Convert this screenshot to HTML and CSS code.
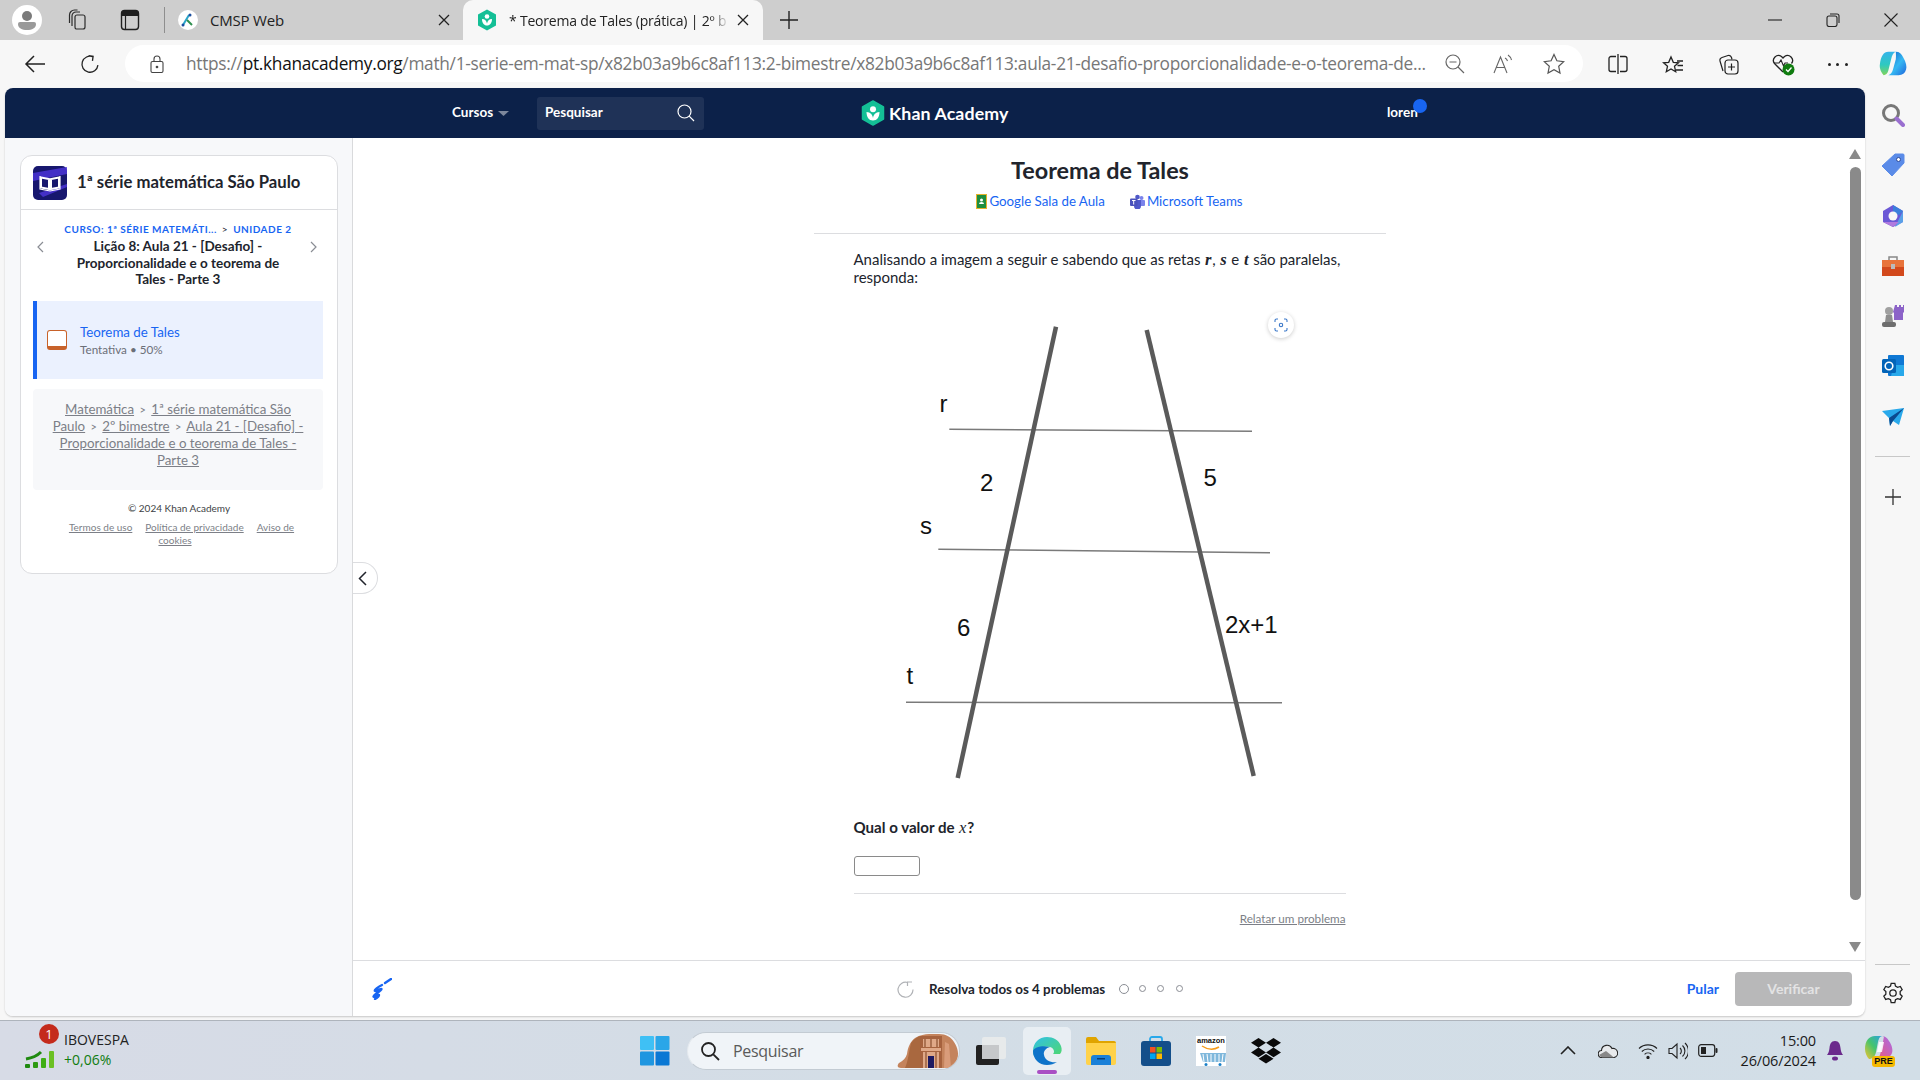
FILE: index.html
```html
<!DOCTYPE html>
<html lang="pt-BR">
<head>
<meta charset="utf-8">
<title>Teorema de Tales</title>
<link rel="stylesheet" href="styles.css">
</head>
<body>
<div class="screen">
  <header class="tabstrip">
    <div class="profile"><svg width="30" height="30" viewBox="0 0 30 30"><circle cx="15" cy="15" r="15" fill="#fff"/><circle cx="15" cy="11" r="5" fill="#7a7a7a"/><path d="M6 19a2 2 0 0 1 2-2h14a2 2 0 0 1 2 2c0 4-4 6-9 6s-9-2-9-6z" fill="#9a9a9a"/></svg></div>
    <div class="strip-ic ic-coll"><svg width="22" height="22" viewBox="0 0 22 22" fill="none" stroke="#2b2b2b" stroke-width="1.2"><path d="M9 20h7a2 2 0 0 0 2-2V8a2 2 0 0 0-2-2H10a2 2 0 0 0-2 2v10a2 2 0 0 0 1 2z"/><path d="M5 17V7a4 4 0 0 1 4-4h4M2.500 14V6a5 5 0 0 1 5-5h3"/></svg></div>
    <div class="strip-ic ic-vert"><svg width="20" height="22" viewBox="0 0 20 22"><rect x="1.500" y="1.500" width="17" height="19" rx="3" fill="none" stroke="#1f1f1f" stroke-width="1.400"/><path d="M1.500 4.500a3 3 0 0 1 3-3h11a3 3 0 0 1 3 3V7h-17z" fill="#1f1f1f"/><path d="M5.500 7v13" stroke="#1f1f1f" stroke-width="1.200"/></svg></div>
    <div class="strip-sep"></div>
    <div class="tab tab-idle">
      <svg class="fav" width="20" height="20" viewBox="0 0 20 20"><circle cx="10" cy="10" r="10" fill="#fff"/><path d="M5 15 11 5" stroke="#2aa3c9" stroke-width="2"/><path d="M9 10l5 5" stroke="#2f8f4e" stroke-width="2"/><circle cx="12" cy="5" r="1.500" fill="#1c4fa0"/><circle cx="5" cy="15" r="1.500" fill="#1c4fa0"/></svg>
      <span class="tab-title">CMSP Web</span>
      <svg class="tab-x" width="12" height="12" viewBox="0 0 12 12"><path d="M1 1l10 10M11 1 1 11" stroke="#222" stroke-width="1.300"/></svg>
    </div>
    <div class="tab tab-active">
      <svg class="fav" width="20" height="22" viewBox="0 0 20 22"><path d="M10 0.500 19 5.500v11l-9 5-9-5v-11z" fill="#14bf96"/><circle cx="10" cy="7.500" r="2.300" fill="#fff"/><path d="M5 10c3 0 4.500 2 5 4.500C10.500 12 12 10 15 10c0 4-2 6.500-5 6.500S5 14 5 10z" fill="#fff"/></svg>
      <span class="tab-title tab-fade">* Teorema de Tales (prática) | 2º b</span>
      <svg class="tab-x" width="12" height="12" viewBox="0 0 12 12"><path d="M1 1l10 10M11 1 1 11" stroke="#222" stroke-width="1.300"/></svg>
    </div>
    <svg class="plus" width="18" height="18" viewBox="0 0 18 18"><path d="M9 0v18M0 9h18" stroke="#222" stroke-width="1.400"/></svg>
    <div class="win-ctrls">
      <svg width="14" height="14" viewBox="0 0 14 14"><path d="M0 7h14" stroke="#222" stroke-width="1.100"/></svg>
      <svg width="14" height="14" viewBox="0 0 14 14" fill="none" stroke="#222" stroke-width="1.100"><rect x="1" y="3" width="10" height="10.500" rx="2"/><path d="M4 1h7a2 2 0 0 1 2 2v7"/></svg>
      <svg width="14" height="14" viewBox="0 0 14 14"><path d="M.5.500l13 13M13.500.500l-13 13" stroke="#222" stroke-width="1.100"/></svg>
    </div>
  </header>

  <nav class="toolbar">
    <svg class="tb-back" width="22" height="18" viewBox="0 0 22 18" fill="none" stroke="#222" stroke-width="1.500"><path d="M21 9H2M10 1 2 9l8 8"/></svg>
    <svg class="tb-reload" width="20" height="20" viewBox="0 0 20 20" fill="none" stroke="#222" stroke-width="1.300"><path d="M12 2.500A8 8 0 1 0 18 10M12 6.500V2H7.500" transform="rotate(8 10 10)"/></svg>
    <div class="omnibox">
      <svg class="lock" width="14" height="18" viewBox="0 0 14 18" fill="none" stroke="#444" stroke-width="1.100"><rect x="1" y="6.500" width="12" height="11" rx="1.500"/><path d="M4 6.500V4a3 3 0 0 1 6 0v2.500"/><circle cx="7" cy="12" r=".8" fill="#444"/></svg>
      <div class="url"><span class="url-dim">https://</span><span class="url-host">pt.khanacademy.org</span><span class="url-dim">/math/1-serie-em-mat-sp/x82b03a9b6c8af113:2-bimestre/x82b03a9b6c8af113:aula-21-desafio-proporcionalidade-e-o-teorema-de...</span></div>
      <div class="omni-icons">
        <svg width="20" height="20" viewBox="0 0 20 20" fill="none" stroke="#666" stroke-width="1.200"><circle cx="8" cy="8" r="7"/><path d="M4.500 8h7M13 13l6 6"/></svg>
        <svg width="22" height="20" viewBox="0 0 22 20" fill="none" stroke="#666" stroke-width="1.100"><path d="M1 19 7.500 3 14 19M3.500 13.500h8"/><path d="M12 4c1 .5 2 1.500 2.500 3M15 1c1.500 1 3 3 3.500 5"/></svg>
        <svg width="22" height="22" viewBox="0 0 22 22" fill="none" stroke="#555" stroke-width="1.200"><path d="M11 1.500l2.900 6.300 6.800.8-5 4.700 1.300 6.800-6-3.400-6 3.400 1.300-6.800-5-4.700 6.800-.8z"/></svg>
      </div>
    </div>
    <div class="tb-right">
      <svg width="20" height="20" viewBox="0 0 20 20" fill="none" stroke="#222" stroke-width="1.300"><path d="M8 2.500H3a2 2 0 0 0-2 2v11a2 2 0 0 0 2 2h5M12 2.500h5a2 2 0 0 1 2 2v11a2 2 0 0 1-2 2h-5M10 0v20"/></svg>
      <svg width="22" height="22" viewBox="0 0 22 22" fill="none" stroke="#222" stroke-width="1.300"><path d="M9 2l2.300 5.300 5.200.5-4 3.500 1.200 5.400L9 14l-4.700 2.700 1.200-5.400-4-3.500 5.200-.5z" transform="translate(0 2)"/><path d="M15 8h6M15.500 12.500h5.500M14 17h7"/></svg>
      <svg width="22" height="22" viewBox="0 0 22 22" fill="none" stroke="#222" stroke-width="1.200"><path d="M6 18 3 8a3 3 0 0 1 2-3.500L11 2.500a3 3 0 0 1 3.500 2l.5 2"/><rect x="8" y="7" width="13" height="14" rx="3"/><path d="M14.500 10.500v7M11 14h7"/></svg>
      <svg width="24" height="24" viewBox="0 0 24 24"><path d="M12 20 3.500 11.500A5 5 0 0 1 10.500 4.500L12 6l1.500-1.500a5 5 0 0 1 7 7" fill="none" stroke="#222" stroke-width="1.300"/><path d="M3 11h5l2-3 2.500 6 1.500-3h3" fill="none" stroke="#222" stroke-width="1.100"/><circle cx="17.500" cy="17.500" r="6" fill="#107c10"/><path d="M15 17.500l2 2 3.500-4" fill="none" stroke="#fff" stroke-width="1.300"/></svg>
      <span class="more"><i></i><i></i><i></i></span>
      <svg width="28" height="30" viewBox="0 0 30 32"><defs><linearGradient id="cp1" x1="0" y1="0" x2="0" y2="1"><stop offset="0" stop-color="#35b4ea"/><stop offset=".55" stop-color="#2ec9c0"/><stop offset="1" stop-color="#7fd45a"/></linearGradient><linearGradient id="cp2" x1="0" y1="0" x2="1" y2="1"><stop offset="0" stop-color="#0f5fc8"/><stop offset=".55" stop-color="#35b8f2"/><stop offset="1" stop-color="#1f66dc"/></linearGradient></defs><path d="M10 3h8c-3 1-4 4-5 8l-3 12c-.7 3-3 5-5 5-2-2-5-7-4-12C2 8 5 3 10 3z" fill="url(#cp1)"/><path d="M18 3c4 0 6 2 8 6 3 5 4 10 3 13-1 4-4 6-8 6H10c3-1 4-3 5-6l3-11c.5-3 0-8 0-8z" fill="url(#cp2)"/></svg>
    </div>
  </nav>

  <div class="workarea">
    <div class="pagecard">
      <div class="ka-nav">
        <div class="nav-left">
          <div class="nav-courses">Cursos <svg width="11" height="5" viewBox="0 0 11 5"><path d="M0 0h11L5.500 5z" fill="#7d879c"/></svg></div>
          <div class="nav-search"><span>Pesquisar</span>
            <svg width="18" height="18" viewBox="0 0 18 18" fill="none" stroke="#fff" stroke-width="1.200"><circle cx="7.500" cy="7.500" r="6.500"/><path d="M12.200 12.200 17 17"/></svg>
          </div>
        </div>
        <div class="nav-logo">
          <svg width="24" height="26" viewBox="0 0 24 26"><path d="M12 1l10.500 6v12L12 25 1.500 19V7z" fill="#14bf96" stroke="#14bf96" stroke-width="1.500" stroke-linejoin="round"/><circle cx="12" cy="9.300" r="3" fill="#fff"/><path d="M5.500 12c4 .2 6 2.800 6.500 6 .5-3.200 2.500-5.800 6.500-6 0 5-2.500 8.500-6.500 8.500S5.500 17 5.500 12z" fill="#fff"/></svg>
          <span>Khan Academy</span>
        </div>
        <div class="nav-user">loren<i class="nav-dot"></i></div>
      </div>

      <div class="ka-body">
        <aside class="ka-side">
          <div class="side-card">
            <div class="side-head">
              <svg width="34" height="34" viewBox="0 0 34 34"><rect width="34" height="34" rx="5" fill="#17176e"/><path d="M0 7 34 1v7L0 15zM6 27l28-9v3L10 31z" fill="#4b35d6" opacity=".85"/><path d="M8 11.500l8 1.500v10l-8-1.500zM26 11.500 18 13v10l8-1.500z" fill="#17176e" stroke="#fff" stroke-width="2"/><path d="M7 10v13l10 2 10-2V10" fill="none" stroke="#fff" stroke-width="1.200"/></svg>
              <h2>1ª série matemática São Paulo</h2>
            </div>
            <div class="lesson-nav">
              <svg class="chev" width="7" height="12" viewBox="0 0 7 12"><path d="M6 1 1 6l5 5" fill="none" stroke="#8a8d94" stroke-width="1.200"/></svg>
              <div class="lesson-text">
                <div class="crumb"><span>CURSO: 1ª SÉRIE MATEMÁTI...</span><b>&gt;</b><span>UNIDADE 2</span></div>
                <div class="lesson-title">Lição 8: Aula 21 - [Desafio] - Proporcionalidade e o teorema de Tales - Parte 3</div>
              </div>
              <svg class="chev" width="7" height="12" viewBox="0 0 7 12"><path d="M1 1l5 5-5 5" fill="none" stroke="#8a8d94" stroke-width="1.200"/></svg>
            </div>
            <div class="exercise">
              <span class="ex-ic"></span>
              <div class="ex-text"><div class="ex-title">Teorema de Tales</div><div class="ex-sub">Tentativa • 50%</div></div>
            </div>
            <div class="paths"><a>Matemática</a> <small>&gt;</small> <a>1ª série matemática São Paulo</a> <small>&gt;</small> <a>2º bimestre</a> <small>&gt;</small> <a>Aula 21 - [Desafio] - Proporcionalidade e o teorema de Tales - Parte 3</a></div>
            <div class="copy">© 2024 Khan Academy</div>
            <div class="legal"><a>Termos de uso</a><a>Política de privacidade</a><a>Aviso de cookies</a></div>
          </div>
          <button class="collapse"><svg width="9" height="15" viewBox="0 0 9 15"><path d="M8 1 1.500 7.500 8 14" fill="none" stroke="#21242c" stroke-width="1.500"/></svg></button>
        </aside>

        <main class="ka-main">
          <div class="ka-scroll">
            <div class="ka-col">
              <h1>Teorema de Tales</h1>
              <div class="share">
                <a><svg width="11" height="15" viewBox="0 0 11 15"><rect x=".5" y=".5" width="10" height="14" fill="#1e8e3e" stroke="#e5b22c"/><circle cx="5.500" cy="6" r="1.500" fill="#fff"/><path d="M3 10a2.500 2 0 0 1 5 0z" fill="#fff"/></svg>Google Sala de Aula</a>
                <a><svg width="15" height="15" viewBox="0 0 15 15"><circle cx="11.500" cy="4" r="2" fill="#7b83eb"/><circle cx="7.500" cy="3" r="2.300" fill="#5059c9"/><rect x="8" y="6" width="7" height="6" rx="1" fill="#7b83eb"/><path d="M4 6h7v6a3 3 0 0 1-7 0z" fill="#5059c9"/><rect y="4.500" width="7.500" height="7.500" rx="1" fill="#4b53bc"/><path d="M2 6.500h3.500M3.700 6.500V10.500" stroke="#fff" stroke-width="1"/></svg>Microsoft Teams</a>
              </div>
              <hr class="rule-top">
              <div class="question">
                <p class="stem">Analisando a imagem a seguir e sabendo que as retas <var>r</var>, <var>s</var> e <var>t</var> são paralelas, responda:</p>
                <div class="figure">
                  <svg class="diagram" width="492" height="480" viewBox="853 314 492 480">
                    <g fill="none" stroke="#7a7a7a" stroke-width="1.500">
                      <path d="M948.300 429.300 1251 431.300"/>
                      <path d="M937.300 549.300 1269 552.700"/>
                      <path d="M905 702.300 1281 702.700"/>
                    </g>
                    <g fill="none" stroke="#5a5a5a" stroke-width="4.500">
                      <path d="M1055 326.700 956.700 778"/>
                      <path d="M1145.700 330 1252.700 776"/>
                    </g>
                    <g class="dia-labels">
                      <text x="938.500" y="412">r</text>
                      <text x="919" y="534">s</text>
                      <text x="905.500" y="684">t</text>
                      <text x="979" y="491">2</text>
                      <text x="1202.500" y="486">5</text>
                      <text x="956" y="636">6</text>
                      <text x="1224" y="632.500">2x+1</text>
                    </g>
                  </svg>
                  <span class="lens"><svg width="14" height="14" viewBox="0 0 14 14" fill="none" stroke="#3b78c9" stroke-width="1.100"><path d="M1 4V2.500A1.500 1.500 0 0 1 2.500 1H4M10 1h1.500A1.500 1.500 0 0 1 13 2.500V4M13 10v1.500a1.500 1.500 0 0 1-1.500 1.500H10M4 13H2.500A1.500 1.500 0 0 1 1 11.500V10"/><circle cx="7" cy="7" r="1.700"/></svg></span>
                </div>
                <p class="ask">Qual o valor de <var>x</var>?</p>
                <div class="answer"></div>
                <hr class="rule-q">
                <div class="report"><a>Relatar um problema</a></div>
              </div>
            </div>
            <div class="vscroll">
              <svg width="12" height="10" viewBox="0 0 12 10"><path d="M6 0l6 10H0z" fill="#8a8a8a"/></svg>
              <div class="thumb-track"><div class="thumb"></div></div>
              <svg width="12" height="10" viewBox="0 0 12 10"><path d="M6 10 0 0h12z" fill="#8a8a8a"/></svg>
            </div>
          </div>
          <footer class="ka-foot">
            <svg class="scratch" width="22" height="22" viewBox="0 0 22 22" fill="none" stroke="#1865f2" stroke-width="2.400" stroke-linecap="round"><path d="M15 5l6-4M12 7C8 9 4 12 5 13s6-3 6.500-2C12 12.500 3 17 3.500 18.500 4 20 9 16 9 17s-2 3-4 4"/></svg>
            <div class="foot-mid">
              <svg width="17" height="18" viewBox="0 0 17 18" fill="none" stroke="#b0b2b6" stroke-width="1.200"><path d="M10.500 2.500A7.500 7.500 0 1 0 16 9.500M10.500 6V2H15"/></svg>
              <span>Resolva todos os 4 problemas</span>
              <div class="dots"><i class="dot-on"></i><i></i><i></i><i></i></div>
            </div>
            <div class="foot-right">
              <a>Pular</a>
              <button>Verificar</button>
            </div>
          </footer>
        </main>
      </div>
    </div>
    <aside class="edge-side">
      <svg width="24" height="24" viewBox="0 0 24 24"><circle cx="10" cy="10" r="7.500" fill="none" stroke="#777" stroke-width="3"/><path d="M15.500 15.500 22 22" stroke="#9a6fd0" stroke-width="4" stroke-linecap="round"/></svg>
      <svg width="24" height="24" viewBox="0 0 24 24"><path d="M14 1h8a1 1 0 0 1 1 1v8L11 23 1 13z" fill="#5a8be8" stroke="#5a8be8" stroke-linejoin="round"/><circle cx="17.500" cy="6.500" r="2" fill="#fff" stroke="#2c4a9a"/></svg>
      <svg width="24" height="24" viewBox="0 0 24 24"><path d="M12 1l10 6v11l-10 5L2 18V7z" fill="#6b58d6"/><path d="M12 1l10 6-4 4-6-2z" fill="#3b7fdc"/><path d="M22 7v11l-8 5 4-8z" fill="#5aa0e8"/><path d="M2 18l10 5 6-5H8z" fill="#b07ade"/><circle cx="12" cy="12" r="4.500" fill="#f7f7f7"/></svg>
      <svg width="24" height="24" viewBox="0 0 24 24"><path d="M8 6V3h8v3" fill="none" stroke="#888" stroke-width="1.500"/><rect x="1" y="6" width="22" height="7" fill="#e8743b"/><rect x="1" y="13" width="22" height="9" fill="#d2491c"/><rect x="10" y="10" width="4" height="5" fill="#bbb"/></svg>
      <svg width="24" height="24" viewBox="0 0 24 24"><circle cx="8" cy="7" r="4" fill="#a0a0a0"/><path d="M5 11h6l1 7H4z" fill="#8e8e8e"/><rect x="1" y="18" width="14" height="5" rx="2" fill="#6e6e6e"/><path d="M14 1h2v2h2V1h2v2h2V1h1v7l-1 1v7h-9V9l-1-1z" fill="#8c63c8"/></svg>
      <svg width="24" height="24" viewBox="0 0 24 24"><rect x="7" y="1" width="16" height="21" rx="1" fill="#0f78d4"/><path d="M13 11h10v11H10z" fill="#28a8ea"/><rect x="1" y="5" width="14" height="14" rx="1.500" fill="#0364b8"/><circle cx="8" cy="12" r="3.800" fill="none" stroke="#fff" stroke-width="1.600"/></svg>
      <svg width="24" height="24" viewBox="0 0 24 24"><path d="M1 6 23 3 18 20l-6-4-3 5-1-8z" fill="#29a9eb"/><path d="M8 13 23 3 12 16l-3 5z" fill="#0b4a8f"/></svg>
      <div class="es-rule es-rule-top"></div>
      <svg width="16" height="16" viewBox="0 0 16 16"><path d="M8 0v16M0 8h16" stroke="#333" stroke-width="1.300"/></svg>
      <div class="es-spacer"></div>
      <div class="es-rule"></div>
      <svg class="es-gear" width="22" height="24" viewBox="0 0 24 24" fill="none" stroke="#222" stroke-width="1.400"><circle cx="12" cy="12" r="3.500"/><path d="M10 1.500h4l.7 3 2.300 1.300 3-.9 2 3.500-2.200 2.100v2.900l2.200 2.100-2 3.500-3-.9-2.300 1.300-.7 3h-4l-.7-3L7 18.100l-3 .9-2-3.500 2.200-2.100v-2.900L2 8.400l2-3.500 3 .9 2.300-1.300z"/></svg>
    </aside>
  </div>

  <footer class="taskbar">
    <div class="widget">
      <div class="widget-ic">
        <svg width="30" height="18" viewBox="0 0 30 18"><path d="M1 9c6-1 11-3 15-7" fill="none" stroke="#1f8a10" stroke-width="3"/><rect x="0" y="14" width="5" height="4" rx="1" fill="#1f8a10"/><rect x="8" y="12" width="5" height="6" rx="1" fill="#2e9a12"/><rect x="16" y="8" width="5" height="10" rx="1" fill="#3fae14"/><rect x="24" y="1" width="5" height="17" rx="1" fill="#6cc024"/></svg>
        <span class="widget-badge">1</span>
      </div>
      <div class="widget-text"><div>IBOVESPA</div><div class="wg-green">+0,06%</div></div>
    </div>
    <div class="tb-center">
      <svg class="win" width="30" height="30" viewBox="0 0 30 30"><rect width="14" height="14" rx="1" fill="#3fc0f5"/><rect x="15.500" width="14" height="14" rx="1" fill="#2aa6e8"/><rect y="15.500" width="14" height="14" rx="1" fill="#1f96e0"/><rect x="15.500" y="15.500" width="14" height="14" rx="1" fill="#0a78d4"/></svg>
      <div class="tb-search">
        <svg width="20" height="20" viewBox="0 0 20 20" fill="none" stroke="#222" stroke-width="1.800"><circle cx="8.500" cy="8.500" r="6.500"/><path d="M13.300 13.300 19 19"/></svg>
        <span>Pesquisar</span>
        <svg class="petra" width="62" height="36" viewBox="0 0 62 36"><path d="M18 5c5-3 10-4 14-4h10c7 0 12 3 15 8 4 6 5 12 3 18-2 5-5 8-10 8H4c-4 0-4-3-2-5 4-2 7-5 8-9 1-7 3-12 8-16z" fill="#c4835c"/><path d="M14 10c3-4 6-6 9-7v32H8c3-6 4-17 6-25z" fill="#a9683f"/><path d="M23 3h22v32H23z" fill="#a6623e"/><path d="M26 6h16v8H26zM24 15h20v3H24zM26 19h16v16H26z" fill="#dfa888"/><rect x="31" y="23" width="6" height="12" fill="#1e1a60"/><path d="M29 19v16M39 19v16M28 6v8M40 6v8M34 6v8" stroke="#8a4f30" stroke-width="1.200"/><path d="M48 9l4 2 2 24h-7z" fill="#d99c7a"/></svg>
      </div>
      <svg class="tv" width="32" height="30" viewBox="0 0 32 30"><rect x="1" y="9" width="23" height="20" rx="2" fill="#222"/><rect x="7" y="1" width="24" height="22" rx="2" fill="#e8eaec" opacity=".92"/><rect x="7" y="9" width="17" height="14" fill="#c6c8ca"/></svg>
      <div class="edge-btn">
        <svg width="30" height="30" viewBox="0 0 30 30"><defs><linearGradient id="ed1" x1="0" y1="0" x2="1" y2="1"><stop offset="0" stop-color="#30c0e8"/><stop offset="1" stop-color="#50d86c"/></linearGradient></defs><path d="M15 1C7 1 1 7 1 15c0 2 .3 3 1 5 2-8 10-11 16-9 4 1 5 5 3 7h7c2-2 2-5 1-8C27 4 21 1 15 1z" fill="url(#ed1)"/><path d="M1 15c0 8 6 14 14 14 4 0 7-1 10-3-5 1-12-1-13-7-.8-4 2-7 6-8-7-2-16 0-17 4z" fill="#0e73c9"/></svg>
        <i></i>
      </div>
      <svg class="t-files" width="30" height="28" viewBox="0 0 30 28"><path d="M0 2a2 2 0 0 1 2-2h8l3 4h15a2 2 0 0 1 2 2v4H0z" fill="#e0a400"/><path d="M0 6h30v20a2 2 0 0 1-2 2H2a2 2 0 0 1-2-2z" fill="#ffd24a"/><path d="M5 28v-7a3 3 0 0 1 3-3h14a3 3 0 0 1 3 3v7z" fill="#1a80d8"/><rect x="11" y="21" width="8" height="1.500" fill="#083f78"/></svg>
      <svg class="t-app" width="30" height="30" viewBox="0 0 30 30"><path d="M9 7V3a2 2 0 0 1 2-2h8a2 2 0 0 1 2 2v4" fill="none" stroke="#28a8ea" stroke-width="1.800"/><rect y="5" width="30" height="25" rx="3" fill="#144f8a"/><rect x="9" y="11" width="5.500" height="5.500" fill="#f25022"/><rect x="15.500" y="11" width="5.500" height="5.500" fill="#7fba00"/><rect x="9" y="17.500" width="5.500" height="5.500" fill="#00a4ef"/><rect x="15.500" y="17.500" width="5.500" height="5.500" fill="#ffb900"/></svg>
      <div class="amazon"><span>amazon</span><svg width="30" height="21" viewBox="0 0 30 21"><path d="M6 1q9 6 17 1" fill="none" stroke="#f59b1b" stroke-width="1.500"/><path d="M1 8h3l3 9h22l1-9z" fill="#7fb8dc"/><path d="M7 9l1 8M11 9l1 8M15 9v8M19 9v8M23 9v8M27 9l-1 8" stroke="#fff" stroke-width="1"/><circle cx="10" cy="19.500" r="1.500" fill="#1a80c8"/><circle cx="24" cy="19.500" r="1.500" fill="#1a80c8"/></svg></div>
      <svg class="t-app" width="30" height="26" viewBox="0 0 30 26"><path d="M7.500 0 15 4.800 7.500 9.600 0 4.800zM22.500 0 30 4.800 22.500 9.600 15 4.800zM0 14.400l7.500-4.800 7.500 4.800-7.500 4.800zM22.500 9.600 30 14.400 22.500 19.200 15 14.400zM7.500 20.800 15 16l7.500 4.800L15 25.600z" fill="#0a0a0a"/></svg>
    </div>
    <div class="tray">
      <svg class="tr-chev" width="16" height="9" viewBox="0 0 16 9"><path d="M1 8l7-7 7 7" fill="none" stroke="#222" stroke-width="1.600"/></svg>
      <svg class="tr-cloud" width="20" height="14" viewBox="0 0 20 14"><path d="M4 13.500a3.500 3.500 0 0 1-.5-7A5.500 5.500 0 0 1 14 4.500a4.500 4.500 0 0 1 2 9z" fill="#e8eaec" stroke="#222" stroke-width="1.100"/><path d="M1 11l7-4 8 6.500H4z" fill="#888"/></svg>
      <svg class="tr-wifi" width="20" height="16" viewBox="0 0 20 16" fill="none" stroke="#222" stroke-width="1.100"><path d="M1 5.500a13 13 0 0 1 18 0M3.800 8.500a9 9 0 0 1 12.400 0M6.600 11.300a5 5 0 0 1 6.800 0"/><circle cx="10" cy="14.500" r="1.100" fill="#222"/></svg>
      <svg class="tr-near" width="20" height="18" viewBox="0 0 20 18" fill="none" stroke="#222" stroke-width="1.100"><path d="M1 6.500h3L9 2v14l-5-4.500H1z"/><path d="M12 6a4 4 0 0 1 0 6M14.500 3.500a7.500 7.500 0 0 1 0 11M17 1a11 11 0 0 1 0 16"/></svg>
      <svg class="tr-near" width="20" height="13" viewBox="0 0 20 13"><rect x=".7" y=".7" width="16" height="11.600" rx="2.500" fill="none" stroke="#222" stroke-width="1.200"/><rect x="3" y="3" width="5" height="7" fill="#222"/><rect x="17.500" y="4" width="2" height="5" rx="1" fill="#222"/></svg>
      <div class="clock"><div>15:00</div><div>26/06/2024</div></div>
      <svg class="bell" width="16" height="20" viewBox="0 0 16 20"><path d="M8 0c4 0 5 3 5.500 7 .3 3 1 5 2.500 7H0c1.500-2 2.200-4 2.500-7C3 3 4 0 8 0z" fill="#6b2a8c"/><ellipse cx="8" cy="17.500" rx="3" ry="2" fill="#6b2a8c"/></svg>
      <div class="cp-pre">
        <svg width="28" height="26" viewBox="0 0 28 26"><defs><linearGradient id="cp3" x1="0" y1="1" x2="1" y2="0"><stop offset="0" stop-color="#f4c430"/><stop offset=".5" stop-color="#46c46c"/><stop offset="1" stop-color="#2aa0e8"/></linearGradient><linearGradient id="cp4" x1="0" y1="1" x2="1" y2="0"><stop offset="0" stop-color="#ee5a7a"/><stop offset="1" stop-color="#a86ae8"/></linearGradient></defs><path d="M10 1h8c-3 0-4 2-5 6l-2 10c-1 5-4 7-7 7-2-2-4-6-4-10C0 6 4 1 10 1z" fill="url(#cp3)"/><path d="M16 1c3 0 6 1 8 5 3 4 4 9 3 12-2 5-6 6-12 6h-4c3-1 4-4 4.500-6l2.500-11c.4-3 1-5 1-6z" fill="url(#cp4)"/><path d="M14 7h5l-2 10h-5z" fill="#fff" opacity=".85"/></svg>
        <span>PRE</span>
      </div>
    </div>
  </footer>
</div>
</body>
</html>
```
FILE: styles.css
```css
* { box-sizing: border-box; }
html, body { margin: 0; padding: 0; width: 1920px; height: 1080px; overflow: hidden; }
body { font-family: "Lato", "Noto Sans", sans-serif; color: #21242c; background: #f7f7f7; }
svg { display: block; flex: none; }
a { color: inherit; }
.screen { display: flex; flex-direction: column; width: 1920px; height: 1080px; }

/* Browser tab strip */
.tabstrip { height: 40px; flex: none; background: #cecece; display: flex; align-items: center; padding-left: 12px; position: relative; font-family: "Open Sans", "Noto Sans", sans-serif; }
.profile { width: 30px; height: 30px; margin-right: 25px; }
.strip-ic { width: 22px; display: flex; justify-content: center; }
.ic-vert { margin-left: 30px; }
.strip-sep { width: 1px; height: 26px; background: #8e8e8e; margin-left: 23px; margin-right: 13px; }
.tab { height: 40px; display: flex; align-items: center; font-size: 14px; letter-spacing: -.2px; color: #222; }
.tab-idle { width: 285px; padding-right: 13px; }
.tab-idle .tab-title { font-size: 15px; }
.tab-active { width: 300px; background: #f7f7f7; border-radius: 10px 10px 0 0; padding-left: 14px; padding-right: 14px; }
.fav { margin-right: 12px; }
.tab-title { flex: 1; white-space: nowrap; overflow: hidden; }
.tab-fade { margin-right: 8px; -webkit-mask-image: linear-gradient(90deg, #000 92%, transparent 100%); mask-image: linear-gradient(90deg, #000 92%, transparent 100%); }
.plus { margin-left: 17px; }
.win-ctrls { margin-left: auto; display: flex; gap: 44px; padding-right: 22px; }

/* Address bar */
.toolbar { height: 48px; flex: none; background: #f7f7f7; display: flex; align-items: center; padding-left: 24px; }
.tb-reload { margin-left: 34px; }
.omnibox { margin-left: 25px; width: 1460px; height: 37px; margin-top: -1px; background: #fff; border-radius: 19px; display: flex; align-items: center; padding-left: 25px; font-family: "Open Sans", "Noto Sans", sans-serif; }
.url { margin-left: 22px; font-size: 17.3px; letter-spacing: -.29px; white-space: nowrap; width: 1242px; flex: none; color: #777; }
.url-host { color: #111; }
.omni-icons { display: flex; align-items: center; gap: 28px; margin-left: 17px; }
.tb-right { display: grid; grid-auto-flow: column; grid-auto-columns: 55px; align-items: center; justify-items: center; margin-left: 7px; }
.more { width: 20px; display: flex; justify-content: space-between; }
.more i { width: 3px; height: 3px; border-radius: 50%; background: #222; }

/* Page */
.workarea { flex: 1; display: flex; min-height: 0; padding-left: 5px; }
.pagecard { width: 1860px; height: 928px; display: flex; flex-direction: column; border-radius: 8px; overflow: hidden; background: #fff; box-shadow: 0 1px 2px rgba(0,0,0,.2); }
.ka-nav { height: 50px; flex: none; background: #0c2149; color: #fff; display: flex; align-items: center; font-size: 13.5px; font-weight: 700; position: relative; }
.nav-left { display: flex; align-items: center; margin-left: 447px; width: 252px; }
.nav-courses { display: flex; align-items: center; gap: 5px; width: 85px; padding-bottom: 2px; }
.nav-courses svg { margin-top: 3px; }
.nav-search { width: 167px; height: 33px; background: #1f3257; border-radius: 3px; display: flex; align-items: center; justify-content: space-between; padding: 0 9px 0 8px; }
.nav-search span { padding-bottom: 2px; }
.nav-logo { display: flex; align-items: center; gap: 4px; margin-left: 157px; font-size: 17.800px; width: 220px; letter-spacing: .1px; }
.nav-user { margin-left: 306px; position: relative; padding-bottom: 2px; }
.nav-dot { position: absolute; right: -9px; top: -5px; width: 14px; height: 14px; border-radius: 50%; background: #1865f2; }

.ka-body { flex: 1; display: flex; min-height: 0; }
.ka-side { width: 348px; flex: none; background: #f7f8fa; border-right: 1px solid #d9dadc; padding: 17px 15px; position: relative; }
.side-card { width: 318px; height: 419px; background: #fff; border: 1px solid #dcdde0; border-radius: 12px; padding-bottom: 20px; }
.side-head { height: 54px; border-bottom: 1px solid #dcdde0; display: flex; align-items: center; padding-left: 12px; gap: 10px; }
.side-head h2 { margin: 0 0 2px; font-size: 16.700px; font-weight: 700; white-space: nowrap; }
.lesson-nav { display: flex; align-items: flex-start; padding: 12px 20px 0 16px; justify-content: space-between; height: 91px; }
.lesson-text { width: 225px; margin-left: 2px; text-align: center; }
.crumb { font-size: 10px; font-weight: 700; color: #1865f2; letter-spacing: .5px; display: flex; justify-content: center; gap: 5px; white-space: nowrap; line-height: 14px; }
.crumb b { color: #21242c; font-weight: 400; }
.lesson-title { font-size: 13.5px; font-weight: 700; line-height: 16.500px; margin-top: 2px; }
.chev { margin-top: 19px; }
.exercise { margin: 0 12px; height: 78px; width: 290px; background: #ebf1fe; border-left: 4px solid #1865f2; display: flex; align-items: center; padding-left: 10px; gap: 13px; }
.ex-ic { width: 20px; height: 20px; border: 1.500px solid #c8622a; border-bottom-width: 4px; border-radius: 3px; background: #fff; flex: none; }
.ex-text { padding-top: 1px; }
.ex-title { font-size: 13.3px; color: #1865f2; line-height: 17px; }
.ex-sub { font-size: 11.7px; color: #6b6f78; line-height: 17px; }
.paths { margin: 10px 12px 0; width: 290px; height: 101px; background: #f7f8fa; border-radius: 4px; padding: 12px 18px 0; text-align: center; font-size: 13.3px; line-height: 17px; color: #7c7f87; }
.paths a { text-decoration: underline; }
.paths small { font-size: 11px; line-height: 0; padding: 0 2px; }
.copy { margin-top: 11px; text-align: center; font-size: 10px; line-height: 14px; color: #3d3f45; }
.legal { margin: 4px 26px 0 31px; text-align: center; font-size: 10px; line-height: 12.500px; color: #7c7f87; padding-top: 2px; }
.legal a { text-decoration: underline; margin-right: 13px; }
.collapse { position: absolute; left: 348px; top: 424px; width: 25px; height: 32px; padding: 0 0 0 5px; background: #fff; border: 1px solid #dcdde0; border-left: none; border-radius: 0 16px 16px 0; z-index: 2; }

.ka-main { flex: 1; display: flex; flex-direction: column; min-width: 0; }
.ka-scroll { flex: 1; display: flex; min-height: 0; border-bottom: 1px solid #dcdde0; }
.ka-col { flex: 1; min-width: 0; display: flex; flex-direction: column; align-items: center; }
.ka-col h1 { margin: 17px 0 0; font-size: 23.4px; line-height: 30px; font-weight: 700; white-space: nowrap; }
.share { display: flex; gap: 25px; font-size: 13.3px; line-height: 18px; color: #1865f2; margin-top: 7px; padding-left: 19px; }
.share a { display: flex; align-items: center; gap: 2px; }
.rule-top { width: 572px; margin: 22.5px 0 0; border: 0; border-top: 1px solid #dcdde0; }
.question { width: 492px; margin-right: 1px; }
.stem { margin: 16px 0 0; font-size: 15px; line-height: 18px; }
var { font-family: "Liberation Serif", serif; font-style: italic; font-weight: 700; font-size: 1.1em; line-height: 0; padding: 0 .8px; }
.figure { position: relative; width: 492px; height: 480px; margin-top: 28.5px; }
.diagram { position: absolute; left: 0; top: 0; }
.dia-labels { font-family: "Liberation Sans", Arial, sans-serif; font-size: 24px; fill: #111; }
.lens { position: absolute; left: 414px; top: -2px; width: 26px; height: 26px; border-radius: 50%; background: #fff; box-shadow: 0 1px 4px rgba(0,0,0,.2); display: flex; align-items: center; justify-content: center; }
.ask { margin: 22.5px 0 0; font-size: 15.100px; font-weight: 700; line-height: 20px; }
.ask var { font-weight: 400; }
.answer { margin-top: 19px; width: 66px; height: 20px; border: 1px solid #8a8a8a; border-radius: 3px; background: #fff; }
.rule-q { margin: 17px 0 0; border: 0; border-top: 1px solid #dcdde0; }
.report { margin-top: 17px; text-align: right; font-size: 11.7px; line-height: 15px; color: #7c7f87; }
.report a { text-decoration: underline; }

.vscroll { width: 16px; flex: none; margin-right: 2px; display: flex; flex-direction: column; align-items: center; padding-top: 11px; }
.thumb-track { height: 780px; margin-top: 8px; }
.thumb { width: 11px; height: 733px; background: #8a8a8a; border-radius: 6px; }
.vscroll svg:last-child { margin-top: -5px; }

.ka-foot { height: 55px; flex: none; display: flex; align-items: center; position: relative; padding-left: 17px; }
.foot-mid { display: flex; align-items: center; margin-left: 505px; font-size: 13.4px; font-weight: 700; }
.foot-mid span { margin-left: 15px; white-space: nowrap; }
.dots { display: flex; align-items: center; gap: 11.500px; margin-left: 14px; }
.dots i { width: 7px; height: 7px; border-radius: 50%; border: 1px solid #8a8d94; }
.dots .dot-on { width: 10px; height: 10px; margin-right: -2px; }
.foot-right { margin-left: auto; display: flex; align-items: center; padding-right: 13px; gap: 16px; font-size: 14px; font-weight: 700; }
.foot-right a { color: #1865f2; }
.foot-right button { width: 117px; height: 34px; border: 0; border-radius: 4px; background: #b8b8b9; color: #e3e3e4; font: 700 14px "Lato", sans-serif; }

/* Edge sidebar */
.edge-side { width: 55px; flex: none; display: flex; flex-direction: column; align-items: center; padding-top: 15px; gap: 26.3px; position: relative; }
.es-rule { width: 35px; height: 1px; background: #c8c8c8; flex: none; }
.es-rule-top { margin-top: 1px; margin-bottom: 5.7px; }
.es-spacer { flex: 1; }
.es-gear { margin-top: -9.800px; margin-bottom: 15px; }

/* Windows taskbar */
.taskbar { height: 60px; flex: none; background: linear-gradient(90deg, #d7dbe6 0%, #d3dde6 45%, #d2dee7 100%); border-top: 1px solid #aeb4bc; display: flex; align-items: center; position: relative; font-family: "Open Sans", "Noto Sans", sans-serif; }
.widget { display: flex; align-items: center; margin-left: 25px; width: 200px; gap: 9px; }
.widget-ic { position: relative; width: 30px; height: 18px; margin-top: 16px; }
.widget-badge { position: absolute; left: 14px; top: -26px; width: 20px; height: 20px; border-radius: 50%; background: #c42b1c; color: #fff; font-size: 13px; line-height: 20px; text-align: center; }
.widget-text { font-size: 14px; line-height: 20px; color: #222; margin-top: -2px; }
.wg-green { color: #107c10; }
.tb-center { display: flex; align-items: center; margin-left: 415px; }
.tb-search { width: 273px; height: 38px; margin-left: 17px; border-radius: 19px; background: #f0f4f8; border: 1px solid #c3cbd3; border-left-color: #e4e9ee; display: flex; align-items: center; padding-left: 12px; font-size: 16px; color: #5a5a5a; position: relative; overflow: hidden; }
.tb-search span { margin-left: 13px; letter-spacing: -.3px; }
.petra { margin-left: auto; }
.tv { margin-left: 15px; }
.edge-btn { width: 48px; height: 48px; margin-left: 16px; background: #e8eef3; border-radius: 5px; display: flex; align-items: center; justify-content: center; position: relative; }
.edge-btn i { position: absolute; left: 14px; bottom: 1px; width: 20px; height: 4px; border-radius: 2px; background: #a94fc4; }
.t-files { margin-left: 15px; }
.t-app { margin-left: 25px; }
.amazon { width: 30px; height: 30px; margin-left: 25px; background: #fff; text-align: center; font: 700 7.500px/9px "Liberation Sans", sans-serif; color: #111; display: flex; flex-direction: column; align-items: center; }
.tray { position: absolute; left: 1560px; top: 0; height: 59px; display: flex; align-items: center; }
.tr-cloud { margin-left: 22px; }
.tr-wifi { margin-left: 20px; }
.tr-near { margin-left: 10px; }
.clock { margin-left: 12px; width: 86px; text-align: right; font-size: 14.500px; line-height: 20px; color: #1a1a1a; letter-spacing: -.15px; }
.bell { margin-left: 11px; }
.cp-pre { position: relative; width: 30px; height: 32px; margin-left: 22px; }
.cp-pre span { position: absolute; left: 7px; bottom: 0; width: 23px; height: 11px; background: #f5b800; border-radius: 3px; font: 700 9px/11px "Liberation Sans", sans-serif; color: #111; text-align: center; }
```
